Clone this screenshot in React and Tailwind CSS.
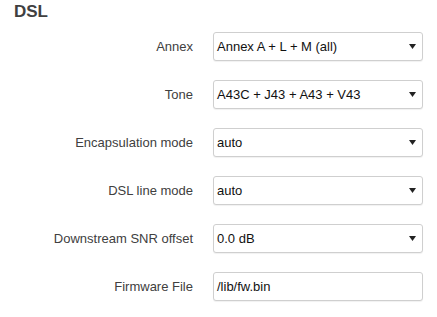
import React from "react";

const rows = [
  { label: "Annex", value: "Annex A + L + M (all)", select: true },
  { label: "Tone", value: "A43C + J43 + A43 + V43", select: true },
  { label: "Encapsulation mode", value: "auto", select: true },
  { label: "DSL line mode", value: "auto", select: true },
  { label: "Downstream SNR offset", value: "0.0 dB", select: true },
  { label: "Firmware File", value: "/lib/fw.bin", select: false },
];

function Field({ value, select }) {
  return (
    <div className="flex h-[29px] w-[210px] items-center rounded-[3px] border border-[#cfcfcf] bg-white pl-[3px] pr-[6px] shadow-[0_1px_1px_rgba(0,0,0,0.06)]">
      <span className="flex-1 text-[13px] text-[#111]">{value}</span>
      {select && (
        <svg width="7" height="5" viewBox="0 0 7 5">
          <polygon points="0,0 7,0 3.5,5" fill="#222" />
        </svg>
      )}
    </div>
  );
}

export default function App() {
  return (
    <div
      className="h-[317px] w-[437px] bg-white"
      style={{ fontFamily: '"Liberation Sans", Arial, sans-serif' }}
    >
      <h2 className="pl-[14px] pt-[2px] text-[17px] font-bold leading-[20px] text-[#404040]">DSL</h2>
      <div className="mt-[10px] flex flex-col gap-[19px]">
        {rows.map((r) => (
          <div key={r.label} className="flex h-[29px] items-center">
            <div className="w-[193px] text-right text-[13px] text-[#404040]">{r.label}</div>
            <div className="ml-[20px]">
              <Field value={r.value} select={r.select} />
            </div>
          </div>
        ))}
      </div>
    </div>
  );
}
